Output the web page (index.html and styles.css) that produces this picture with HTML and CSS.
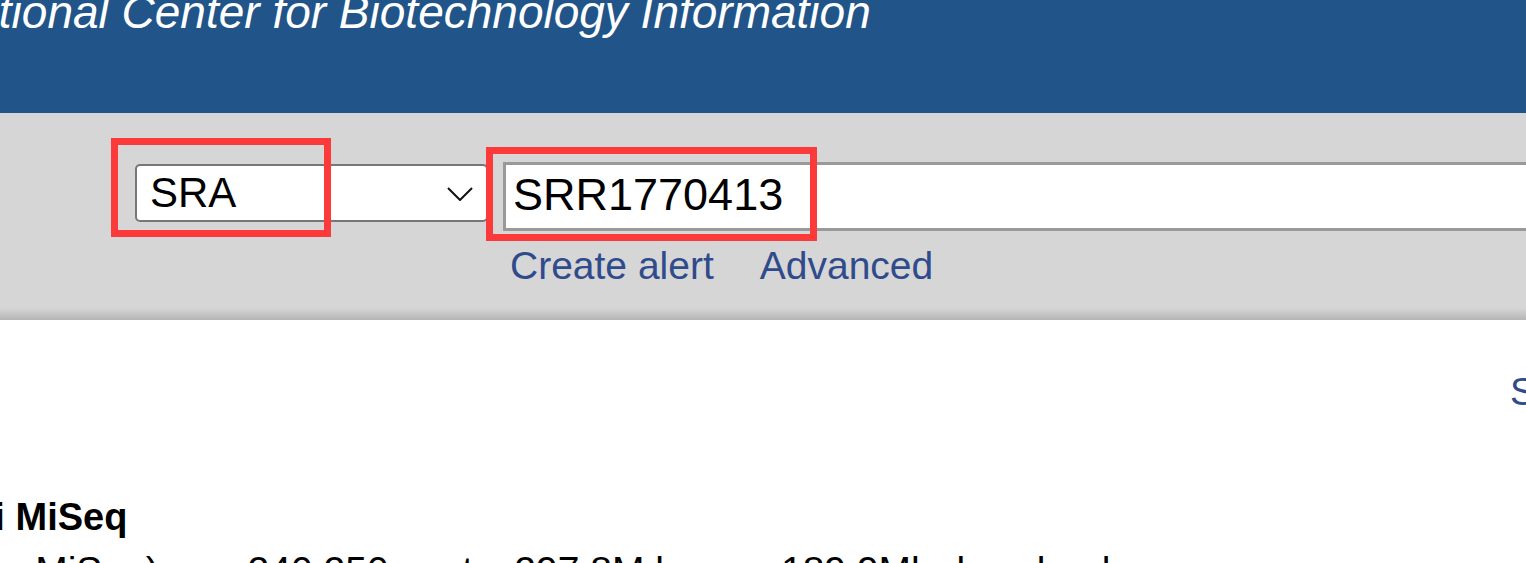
FILE: index.html
```html
<!DOCTYPE html>
<html lang="en">
<head>
<meta charset="utf-8">
<title>SRA - NCBI</title>
<link rel="stylesheet" href="styles.css">
</head>
<body>
<header class="ncbi-header">
  <div class="ncbi-title">National Center for Biotechnology Information</div>
</header>
<section class="search-band">
  <div class="search-row">
    <div class="db-select">
      <span class="db-value">SRA</span>
      <svg class="chevron" width="26" height="14" viewBox="0 0 26 14"><path d="M1 1 L13 13 L25 1" fill="none" stroke="#111" stroke-width="2"/></svg>
    </div>
    <input class="term-input" type="text" value="SRR1770413">
  </div>
  <div class="search-links">
    <a href="#" class="link">Create alert</a>
    <a href="#" class="link">Advanced</a>
  </div>
  <div class="mark mark-db"></div>
  <div class="mark mark-term"></div>
</section>
<main class="content">
  <div class="tools-row"><a href="#" class="link">Send to:</a></div>
  <div class="record">
    <h2 class="record-title">E. coli MiSeq</h2>
    <p class="record-summary">(Illumina MiSeq) run: 240,250 spots, 297.8M bases, 189.9Mb downloads</p>
  </div>
</main>
</body>
</html>
```
FILE: styles.css
```css
html, body {
  margin: 0;
  padding: 0;
}
body {
  width: 1526px;
  height: 563px;
  overflow: hidden;
  font-family: "Liberation Sans", Arial, sans-serif;
  background: #fff;
  color: #000;
}
.ncbi-header {
  height: 113px;
  background: #215589;
  overflow: hidden;
}
.ncbi-title {
  color: #fff;
  font-style: italic;
  font-size: 46px;
  line-height: 46px;
  margin-top: -11px;
  text-indent: -60px;
  white-space: nowrap;
}
.search-band {
  position: relative;
  height: 207px;
  background: linear-gradient(to bottom, #d6d6d6 0, #d6d6d6 195px, #b5b5b5 207px);
  overflow: hidden;
}
.search-row {
  display: flex;
  align-items: flex-start;
  padding: 49px 0 0 135px;
  width: 2000px;
}
.db-select {
  box-sizing: border-box;
  width: 353px;
  height: 58px;
  margin-top: 2px;
  border: 2px solid #777;
  border-radius: 5px;
  background: #fff;
  display: flex;
  align-items: center;
  justify-content: space-between;
  padding: 0 13px 1px 13px;
}
.db-value {
  font-size: 42px;
  line-height: 54px;
}
.chevron {
  display: block;
  margin-top: 2px;
}
.term-input {
  box-sizing: border-box;
  margin: 0 0 0 15px;
  width: 1200px;
  height: 69px;
  border: 3px solid #999;
  border-radius: 0;
  background: #fff;
  font-family: "Liberation Sans", Arial, sans-serif;
  font-size: 45px;
  color: #000;
  padding: 0 0 3px 7px;
  outline: none;
}
.search-links {
  display: flex;
  gap: 46px;
  padding-left: 510px;
  margin-top: 13px;
}
.link {
  color: #2f4b8c;
  text-decoration: none;
  font-size: 39px;
  line-height: 44px;
  white-space: nowrap;
}
.mark {
  position: absolute;
  box-sizing: border-box;
  border: 7px solid #fc3a3a;
}
.mark-db {
  left: 111px;
  top: 25px;
  width: 220px;
  height: 99px;
}
.mark-term {
  left: 486px;
  top: 34px;
  width: 331px;
  height: 94px;
}
.content {
  padding-top: 50px;
}
.tools-row {
  padding-left: 1510px;
  white-space: nowrap;
  height: 44px;
}
.tools-row .link {
  font-size: 38px;
}
.record {
  margin-left: -107px;
  margin-top: 81px;
  white-space: nowrap;
}
.record-title {
  margin: 0;
  font-size: 38px;
  line-height: 44px;
  font-weight: bold;
}
.record-summary {
  margin: 10px 0 0 -16px;
  font-size: 39px;
  line-height: 44px;
}
```
